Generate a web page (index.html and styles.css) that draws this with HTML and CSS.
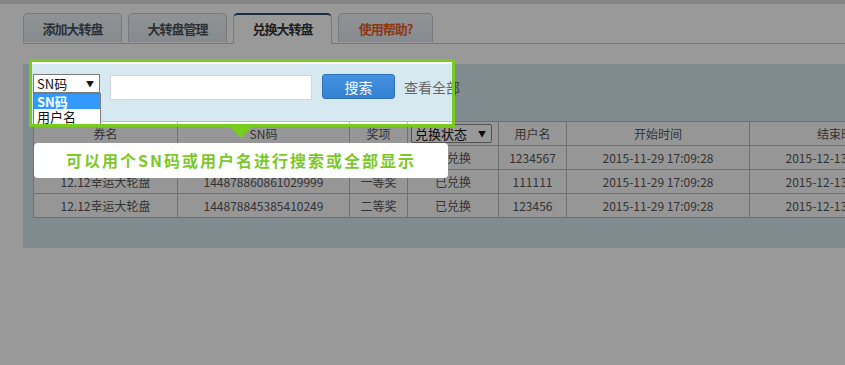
FILE: index.html
```html
<!DOCTYPE html>
<html lang="zh-CN">
<head>
    <meta charset="UTF-8">
    <title>兑换大转盘</title>
    <link rel="stylesheet" href="styles.css">
</head>
<body>
    <div class="topbar"></div>

    <ul class="tabs">
        <li>添加大转盘</li>
        <li>大转盘管理</li>
        <li class="active">兑换大转盘</li>
        <li class="help">使用帮助?</li>
    </ul>

    <div class="panel">
        <div class="search">
            <div class="select">
                SN码<span class="caret">&#9660;</span>
                <!-- 展开的下拉 -->
                <ul class="options">
                    <li class="on">SN码</li>
                    <li>用户名</li>
                </ul>
            </div>
            <input class="keyword" type="text">
            <button class="btn">搜索</button>
            <a class="all" href="#">查看全部</a>
        </div>

        <table class="list">
            <colgroup>
                <col style="width:144px"><col style="width:172px"><col style="width:58px">
                <col style="width:91px"><col style="width:68px"><col style="width:183px">
                <col style="width:183px"><col style="width:100px">
            </colgroup>
            <tr>
                <th>券名</th>
                <th>SN码</th>
                <th>奖项</th>
                <th><div class="state">兑换状态<span class="caret">&#9660;</span></div></th>
                <th>用户名</th>
                <th>开始时间</th>
                <th>结束时间</th>
                <th>操作</th>
            </tr>
            <tr>
                <td>12.12幸运大轮盘</td>
                <td>144878860861029998</td>
                <td>一等奖</td>
                <td>已兑换</td>
                <td>1234567</td>
                <td>2015-11-29 17:09:28</td>
                <td>2015-12-13 17:09:28</td>
                <td></td>
            </tr>
            <tr>
                <td>12.12幸运大轮盘</td>
                <td>144878860861029999</td>
                <td>一等奖</td>
                <td>已兑换</td>
                <td>111111</td>
                <td>2015-11-29 17:09:28</td>
                <td>2015-12-13 17:09:28</td>
                <td></td>
            </tr>
            <tr>
                <td>12.12幸运大轮盘</td>
                <td>144878845385410249</td>
                <td>二等奖</td>
                <td>已兑换</td>
                <td>123456</td>
                <td>2015-11-29 17:09:28</td>
                <td>2015-12-13 17:09:28</td>
                <td></td>
            </tr>
        </table>
    </div>

    <!-- 帮助引导：高亮搜索区域 -->
    <div class="spotlight"><span class="arrow"></span></div>
    <div class="tip">可以用个SN码或用户名进行搜索或全部显示</div>
</body>
</html>
```

FILE: styles.css
```css
body {
    margin: 0;
    background: #fff;
    font-family: "Liberation Sans", "Noto Sans CJK SC", sans-serif;
    color: #333;
    overflow: hidden;
    height: 365px;
}

.topbar {
    height: 4px;
    background: #dcdcdc;
}

.tabs {
    list-style: none;
    margin: 9px 0 0 23px;
    padding: 0;
    display: flex;
    gap: 6px;
    border-bottom: 1px solid #c8c8c8;
    height: 30px;
}

.tabs li {
    width: 99px;
    height: 29px;
    box-sizing: border-box;
    border: 1px solid #c2ccd5;
    border-bottom: none;
    border-radius: 5px 5px 0 0;
    background: linear-gradient(#f2f6f9, #dfe7ee);
    text-align: center;
    line-height: 29px;
    font-family: "Noto Sans CJK SC", sans-serif;
    font-size: 13px;
    font-weight: bold;
    letter-spacing: -1px;
    color: #4a525d;
}

.tabs li.active {
    height: 31px;
    background: #fff;
    border-top: 2px solid #2c4870;
    line-height: 28px;
    color: #333;
}

.tabs li.help {
    width: 95px;
    color: #ee5a1c;
}

.panel {
    margin: 20px 0 0 23px;
    padding: 10px 0 30px 10px;
    background: #d6e8f0;
    overflow: hidden;
}

.search {
    display: flex;
    align-items: flex-start;
    height: 26px;
}

.select {
    position: relative;
    width: 67px;
    height: 19px;
    box-sizing: border-box;
    border: 1px solid #7a7a7a;
    background: #fff;
    font-family: "Noto Sans CJK SC", sans-serif;
    font-size: 13px;
    line-height: 17px;
    padding-left: 3px;
    color: #111;
}

.caret {
    position: absolute;
    right: 5px;
    top: 0;
    font-size: 8px;
}

.options {
    position: absolute;
    left: -1px;
    top: 18px;
    width: 66px;
    margin: 0;
    padding: 0;
    list-style: none;
    border: 1px solid #7a7a7a;
    background: #fff;
}

.options li {
    height: 15px;
    line-height: 15px;
    padding-left: 3px;
}

.options li.on {
    background: #3399ff;
    color: #fff;
    font-weight: bold;
}

.keyword {
    width: 202px;
    height: 25px;
    box-sizing: border-box;
    margin: 1px 0 0 10px;
    border: 1px solid #cfd6da;
    background: #fff;
}

.btn {
    width: 73px;
    height: 25px;
    margin-left: 10px;
    border: 1px solid #2d6fba;
    border-radius: 3px;
    background: linear-gradient(#4592e0, #3480d2);
    color: #fff;
    font-family: "Noto Sans CJK SC", sans-serif;
    font-size: 14px;
    padding: 0;
}

.all {
    margin-left: 9px;
    line-height: 26px;
    font-family: "Noto Sans CJK SC", sans-serif;
    font-size: 14px;
    color: #666;
    text-decoration: none;
}

.list {
    margin-top: 21px;
    border-collapse: collapse;
    table-layout: fixed;
    width: 999px;
    background: #fbfbfb;
    font-family: "Noto Sans CJK SC", sans-serif;
    font-size: 12px;
    color: #555;
}

.list th,
.list td {
    height: 23px;
    padding: 0;
    border: 1px solid #bbb;
    text-align: center;
    font-weight: normal;
    white-space: nowrap;
    overflow: hidden;
}

.state {
    position: relative;
    width: 81px;
    height: 19px;
    box-sizing: border-box;
    margin-left: 3px;
    border: 1px solid #888;
    border-radius: 2px;
    background: #fff;
    text-align: left;
    padding-left: 3px;
    line-height: 17px;
    font-size: 13px;
    color: #111;
}

.spotlight {
    position: absolute;
    left: 29px;
    top: 59px;
    width: 420px;
    height: 62px;
    border: 3px solid #78cc1e;
    box-shadow: 0 0 0 2000px rgba(0, 0, 0, 0.4);
    z-index: 10;
    pointer-events: none;
}

.arrow {
    position: absolute;
    left: 198px;
    top: calc(100% + 3px);
    border-left: 11px solid transparent;
    border-right: 11px solid transparent;
    border-top: 11px solid #78cc1e;
}

.tip {
    position: absolute;
    left: 34px;
    top: 143px;
    width: 414px;
    height: 35px;
    border-radius: 4px;
    background: #fff;
    z-index: 11;
    text-align: center;
    line-height: 35px;
    font-family: "Noto Sans CJK SC", sans-serif;
    font-size: 16px;
    font-weight: bold;
    letter-spacing: 2px;
    color: #7cc82a;
}
```
